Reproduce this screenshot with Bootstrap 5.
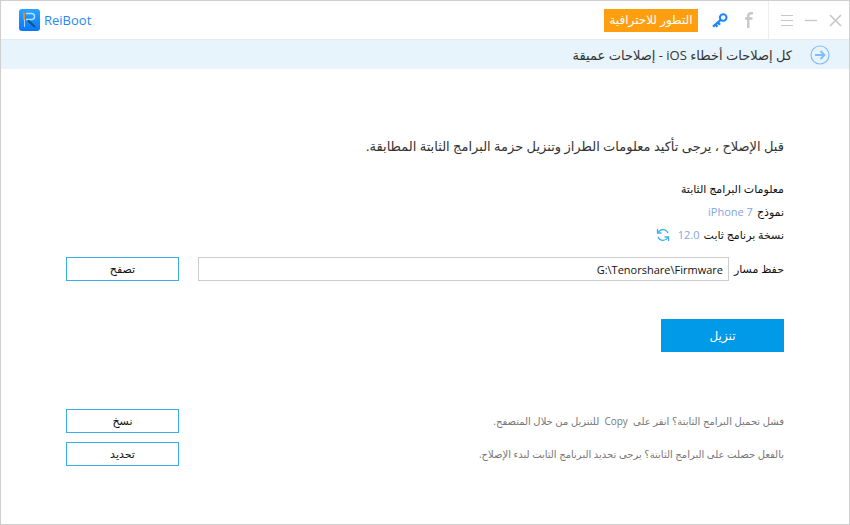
<!DOCTYPE html>
<html lang="ar" dir="rtl">
<head>
<meta charset="utf-8">
<meta name="viewport" content="width=device-width, initial-scale=1">
<title>ReiBoot</title>
<link rel="stylesheet" href="https://cdn.jsdelivr.net/npm/bootstrap@5.3.0/dist/css/bootstrap.min.css">
<style>
body { font-family: "Open Sans", "DejaVu Sans", sans-serif; font-size: 11px; line-height: 24px; color: #111; }
.app-window { border: 1px solid #cfcfcf; }
.title-bar { height: 38px; }
.window-tools { gap: 12px; padding-right: 7px; padding-left: 12px; border-left: 1px solid #eee; }
.app-tools { gap: 14px; padding-right: 12px; }
.icon-btn { background: none; border: 0; padding: 0; display: flex; color: #c8c8c8; }
.icon-btn svg, .app-logo svg { display: block; }
.upgrade-btn { background: #ff9f0f; color: #fff; width: 94px; height: 23px; font-size: 12px; line-height: 20px; border: 0; padding: 0; border-radius: 0; white-space: nowrap; }
.app-logo { gap: 4px; padding-left: 18px; color: #2589f5; font-size: 13px; font-weight: 500; }
.crumb-bar { height: 30px; background: #e8f4fb; padding-right: 19px; gap: 18px; border-top: 1px solid #e2edf3; }
.crumb-bar h1 { font-size: 13px; line-height: 24px; color: #333; }
.crumb-bar a { color: #80bdfa; }
.page-body { padding: 65px 65px 32px; }
.lead-text { font-size: 13px; line-height: 24px; color: #333; margin-bottom: 19px; }
.soft-blue { color: #85a5e0; }
.info-row { height: 23px; gap: 4px; }
.refresh-btn { margin-right: 4px; }
.path-row { gap: 5px; margin-top: 11px; }
.path-input { height: 24px; border: 1px solid #ccc; border-radius: 0; padding: 0 5px; font-size: 11px; line-height: 20px; color: #111; text-align: right; }
.line-btn { width: 113px; height: 24px; border: 1px solid #3aaeea; border-radius: 0; padding: 0; font-size: 11px; line-height: 20px; color: #111; background: #fff; }
.browse-btn { margin-right: 14px; }
.download-btn { width: 123px; height: 33px; margin-top: 38px; background: #009ae8; color: #fff; border: 0; border-radius: 0; font-size: 12px; padding: 0; }
.help-rows { margin-top: 57px; display: grid; gap: 9px; }
.help-rows p { font-size: 10px; line-height: 24px; color: #777; }
</style>
<script src="https://cdn.jsdelivr.net/npm/bootstrap@5.3.0/dist/js/bootstrap.bundle.min.js"></script>
</head>
<body class="bg-white">
<div class="app-window min-vh-100">
  <header class="title-bar d-flex align-items-stretch">
    <div class="window-tools d-flex align-items-center">
      <button class="icon-btn" type="button" aria-label="إغلاق"><svg width="13" height="13" viewBox="0 0 13 13" stroke="currentColor" stroke-width="1.7"><path d="M1 1l11 11M12 1L1 12"/></svg></button>
      <button class="icon-btn" type="button" aria-label="تصغير"><svg width="12" height="13" viewBox="0 0 12 13" stroke="currentColor" stroke-width="1.4"><path d="M0 6.5h12"/></svg></button>
      <button class="icon-btn" type="button" aria-label="القائمة"><svg width="12" height="13" viewBox="0 0 12 13" stroke="currentColor"><path d="M0 1.5h12M0 6.5h12M0 11.5h12"/></svg></button>
    </div>
    <div class="app-tools d-flex align-items-center">
      <button class="icon-btn" type="button" aria-label="فيسبوك"><svg width="14" height="16" viewBox="0 0 14 16" fill="none" stroke="currentColor" stroke-width="2.4"><path d="M11 1.3H9Q6.300 1.300 6.300 4V16M3 6.500h7.500"/></svg></button>
      <button class="icon-btn" type="button" aria-label="مفتاح التسجيل"><svg width="16" height="15" viewBox="0 0 16 15" fill="none" stroke="#1787fb"><circle cx="11.200" cy="4.500" r="3.300" stroke-width="2"/><path d="M8.800 6.800L1 13.600M3.500 11.500l2 2.200M6 9.500l2 2.200" stroke-width="2.200"/></svg></button>
      <button class="upgrade-btn btn" type="button">التطور للاحترافية</button>
    </div>
    <div class="app-logo d-flex align-items-center me-auto" dir="ltr">
      <svg width="21" height="22" viewBox="0 0 21 22" fill="none"><defs><linearGradient id="tile" x2="0" y2="1"><stop stop-color="#29a5ff"/><stop offset="1" stop-color="#0878f8"/></linearGradient></defs><rect width="21" height="22" rx="3" fill="url(#tile)"/><path d="M5.500 10v8" stroke="#a9d3fa" stroke-width="1"/><path d="M5 3.500v7" stroke="#dc8b38" stroke-width="2"/><path d="M7 4.500h5.500q3 0 3 3t-3 3H7" stroke="#b9dfff" stroke-width="1.500"/><path d="M9 11.500l7 6.500" stroke="#174f82" stroke-width="2"/></svg>
      <span>ReiBoot</span>
    </div>
  </header>
  <nav class="crumb-bar d-flex align-items-center">
    <a href="#" aria-label="رجوع"><svg class="d-block" width="20" height="20" viewBox="0 0 20 20" fill="none" stroke="currentColor"><circle cx="10" cy="10" r="9" stroke-width="1.200"/><path d="M5 10h9M10.500 6l4 4-4 4" stroke-width="1.800"/></svg></a>
    <h1 class="m-0 fw-normal">كل إصلاحات أخطاء iOS - إصلاحات عميقة</h1>
  </nav>
  <main class="page-body">
    <p class="lead-text">قبل الإصلاح ، يرجى تأكيد معلومات الطراز وتنزيل حزمة البرامج الثابتة المطابقة.</p>
    <div class="info-row d-flex align-items-center">معلومات البرامج الثابتة</div>
    <div class="info-row d-flex align-items-center"><span>نموذج</span><span class="soft-blue" dir="ltr">iPhone 7</span></div>
    <div class="info-row d-flex align-items-center"><span>نسخة برنامج ثابت</span><span class="soft-blue">12.0</span>
      <button class="icon-btn refresh-btn" type="button" aria-label="تحديث"><svg width="14" height="14" viewBox="0 0 14 14" fill="none" stroke="#38aeea" stroke-width="1.300"><path d="M2 4.500Q4 1.600 7 1.600q3.500 0 5 3.400M12 9.500q-2 2.900-5 2.900-3.500 0-5-3.400"/><path d="M1.500 1v4H5.500M12.500 13V9H8.500"/></svg></button>
    </div>
    <div class="path-row d-flex align-items-center">
      <label for="savePath" class="text-nowrap">حفظ مسار</label>
      <input id="savePath" class="path-input form-control flex-fill" type="text" dir="ltr" value="G:\Tenorshare\Firmware">
      <button class="line-btn browse-btn btn flex-shrink-0" type="button">تصفح</button>
    </div>
    <button class="download-btn btn d-block" type="button">تنزيل</button>
    <div class="help-rows">
      <div class="d-flex justify-content-between align-items-center"><p class="m-0">فشل تحميل البرامج الثابتة؟ انقر على&nbsp; Copy &nbsp;للتنزيل من خلال المتصفح.</p><button class="line-btn btn" type="button">نسخ</button></div>
      <div class="d-flex justify-content-between align-items-center"><p class="m-0">بالفعل حصلت على البرامج الثابتة؟ يرجى تحديد البرنامج الثابت لبدء الإصلاح.</p><button class="line-btn btn" type="button">تحديد</button></div>
    </div>
  </main>
</div>
</body>
</html>
